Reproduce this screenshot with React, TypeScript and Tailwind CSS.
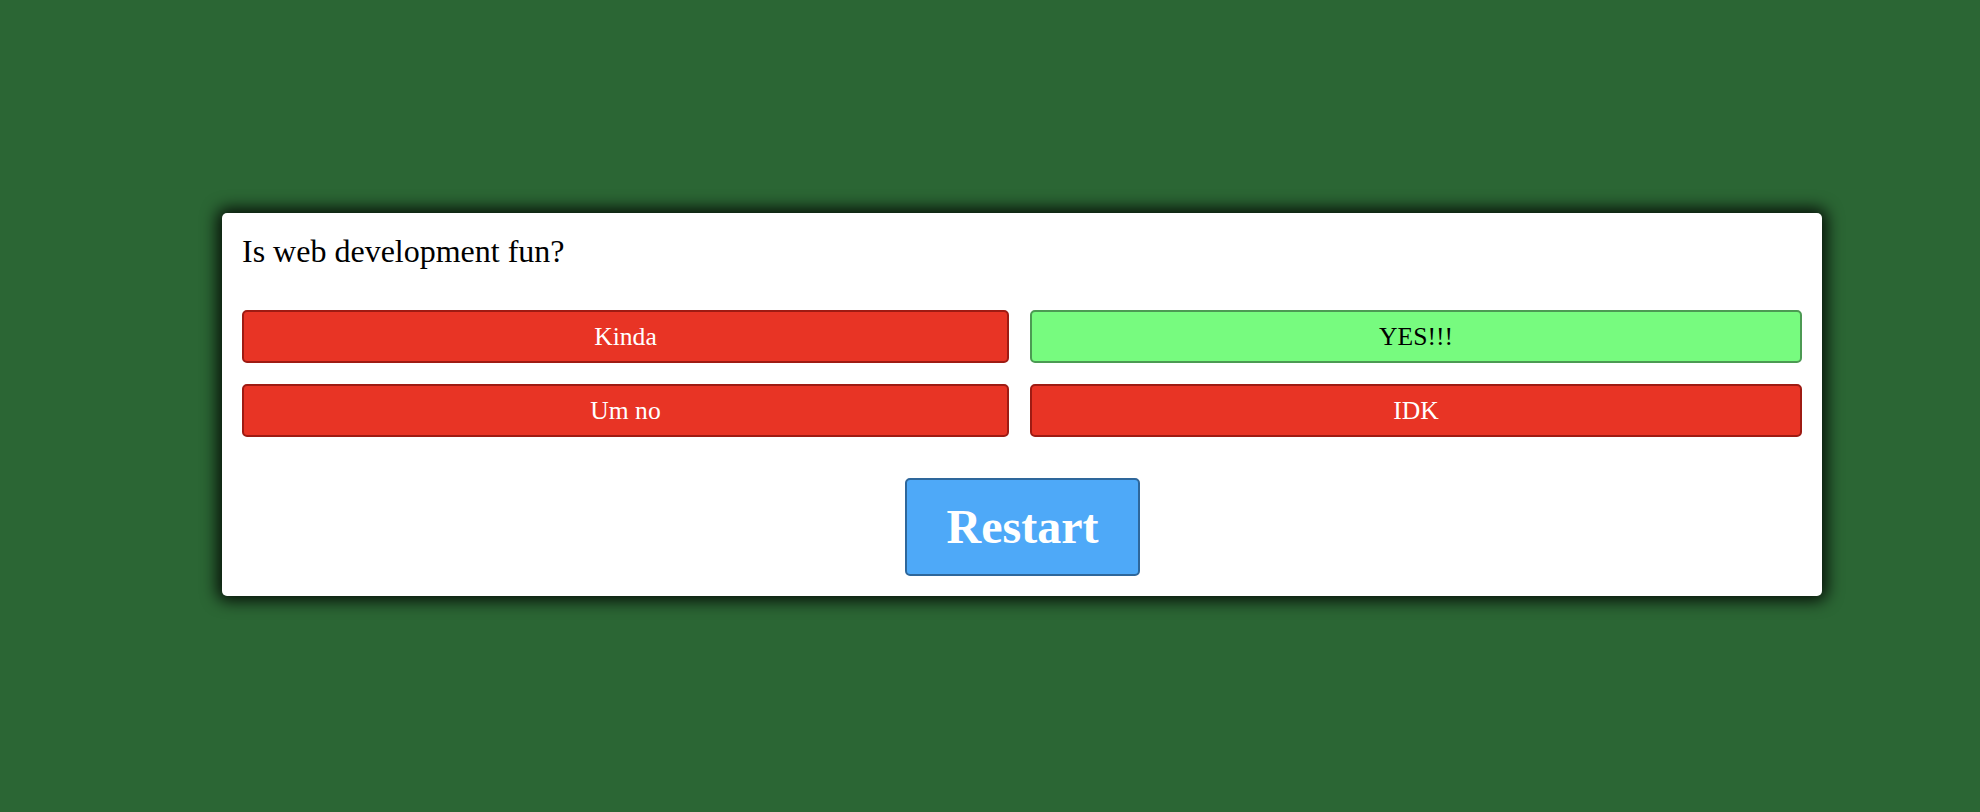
import React from 'react';

type Answer = { text: string; correct: boolean };

const answers: Answer[] = [
  { text: 'Kinda', correct: false },
  { text: 'YES!!!', correct: true },
  { text: 'Um no', correct: false },
  { text: 'IDK', correct: false },
];

const AnswerButton: React.FC<{ answer: Answer }> = ({ answer }) => (
  <button
    className={
      answer.correct
        ? 'rounded-[5px] border-2 border-[#4c9a53] bg-[#77fb7f] px-2 py-[10px] text-[25.6px] leading-[1.15] text-black'
        : 'rounded-[5px] border-2 border-[#9e1b13] bg-[#e83425] px-2 py-[10px] text-[25.6px] leading-[1.15] text-white'
    }
  >
    {answer.text}
  </button>
);

export default function App() {
  return (
    <div className="flex h-[812px] w-full items-center bg-[#2b6634] pl-[222px] font-['Liberation_Serif',serif]">
      <div className="mb-[3px] w-[1600px] rounded-[5px] bg-white p-5 shadow-[0_0_16px_5px_rgba(0,0,0,0.85)]">
        <div className="text-[32px] leading-[37px] text-black">Is web development fun?</div>
        <div className="mt-10 grid grid-cols-[767px_772px] gap-[21px]">
          {answers.map((a) => (
            <AnswerButton key={a.text} answer={a} />
          ))}
        </div>
        <div className="mt-[41px] flex justify-center">
          <button className="ml-[1px] h-[98px] w-[235px] rounded-[5px] border-2 border-[#2e679b] bg-[#4ea9f8] text-[48px] font-bold leading-none text-white">
            Restart
          </button>
        </div>
      </div>
    </div>
  );
}
